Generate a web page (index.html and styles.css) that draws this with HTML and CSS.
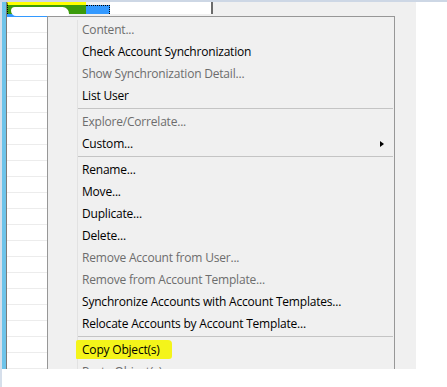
FILE: index.html
```html
<!DOCTYPE html>
<html lang="en">
<head>
  <meta charset="UTF-8" />
  <title>Account Context Menu</title>
  <link rel="stylesheet" href="styles.css">
</head>
<body>
  <div class="topline"></div>
  <div class="frame">
    <div class="edge"></div>
    <div class="pane">
      <div class="bluebar"></div>
      <div class="darkline"></div>
      <div class="content">
        <!-- Header row with the selected cell -->
        <div class="header">
          <div class="cell-sel"><span class="scribble"></span></div>
          <div class="cell-blue"></div>
          <div class="cell-rest"></div>
        </div>
        <div class="grid">
          <div class="selstrip"></div>
          <div class="row"></div><div class="row"></div><div class="row"></div><div class="row"></div>
          <div class="row"></div><div class="row"></div><div class="row"></div><div class="row"></div>
          <div class="row"></div><div class="row"></div><div class="row"></div><div class="row"></div>
          <div class="row"></div><div class="row"></div><div class="row"></div><div class="row"></div>
          <div class="row"></div><div class="row"></div><div class="row"></div><div class="row"></div>
          <div class="row"></div><div class="row"></div>
        </div>
      </div>

      <!-- Context Menu -->
      <div class="menu">
        <div class="item disabled">Content...</div>
        <div class="item">Check Account Synchronization</div>
        <div class="item disabled">Show Synchronization Detail...</div>
        <div class="item">List User</div>
        <div class="sep"></div>
        <div class="item disabled">Explore/Correlate...</div>
        <div class="item">Custom...<span class="arrow"></span></div>
        <div class="sep"></div>
        <div class="item">Rename...</div>
        <div class="item">Move...</div>
        <div class="item">Duplicate...</div>
        <div class="item">Delete...</div>
        <div class="item disabled">Remove Account from User...</div>
        <div class="item disabled">Remove from Account Template...</div>
        <div class="item">Synchronize Accounts with Account Templates...</div>
        <div class="item">Relocate Accounts by Account Template...</div>
        <div class="sep"></div>
        <div class="item"><span class="marker">Copy Object(s)</span></div>
        <div class="item disabled">Paste Object(s)</div>
      </div>
    </div>
  </div>
</body>
</html>
```

FILE: styles.css
```css
body {
  margin: 0;
  padding: 0;
  background: #fff;
  font-family: "Segoe UI", "Open Sans", "Noto Sans", sans-serif;
  font-size: 12px;
}
.topline {
  height: 2px;
  background-color: #cdd7e5;
}
.frame {
  display: flex;
  height: 385px;
}
.edge {
  width: 2px;
  background-color: #d6dfeb;
}
.pane {
  position: relative;
  display: flex;
  width: 414px;
  height: 367px;
  overflow: hidden;
  background-color: #f0f0f0;
}
.bluebar {
  width: 4px;
  background-color: #6ec4ea;
}
.darkline {
  width: 1px;
  background-color: #7a7a7a;
}
.content {
  display: flex;
  flex-direction: column;
}
.header {
  display: flex;
  height: 15px;
}
.cell-sel {
  position: relative;
  width: 79px;
  box-sizing: border-box;
  background-color: #3a9b0b;
  border-top: 3px solid #ffff00;
  border-left: 1px dotted #000;
}
.scribble {
  position: absolute;
  left: 3px;
  top: 2px;
  width: 58px;
  height: 9px;
  background-color: #fff;
  border-radius: 6px 10px 4px 8px;
}
.cell-blue {
  width: 24px;
  box-sizing: border-box;
  background-color: #3399ff;
  border-top: 1px dotted #000;
  border-right: 1px dotted #000;
  margin-top: 3px;
}
.cell-rest {
  width: 101px;
  background-color: #fff;
  border-right: 2px solid #6b6b6b;
}
.grid {
  width: 40px;
  flex: 1;
  background-color: #fff;
  border-right: 1px solid #a0a0a0;
}
.selstrip {
  height: 3px;
  background-color: #3399ff;
}
.row {
  height: 15px;
  border-bottom: 1px solid #ececec;
}

/* context menu */
.menu {
  position: absolute;
  left: 45px;
  top: 14px;
  width: 348px;
  box-sizing: border-box;
  padding: 2px;
  background-color: #f0f0f0;
  border: 1px solid #979797;
}
.menu::before {
  content: "";
  position: absolute;
  left: 29px;
  top: 3px;
  bottom: 0;
  width: 1px;
  background-color: #e2e2e2;
}
.item {
  position: relative;
  height: 22px;
  line-height: 22px;
  padding-left: 32px;
  color: #000;
  letter-spacing: -0.2px;
  white-space: nowrap;
}
.item.disabled {
  color: #6d6d6d;
}
.sep {
  height: 1px;
  margin: 1px -1px 2px 27px;
  background-color: #c4c4c4;
}
.arrow {
  position: absolute;
  right: 8px;
  top: 8px;
  width: 0;
  height: 0;
  border-left: 4px solid #000;
  border-top: 3.5px solid transparent;
  border-bottom: 3.5px solid transparent;
}
.marker {
  display: inline-block;
  line-height: 19px;
  margin-left: -6px;
  padding: 0 12px 0 6px;
  background-color: #f4f41a;
  border-radius: 2px 4px 3px 1px;
}
```
